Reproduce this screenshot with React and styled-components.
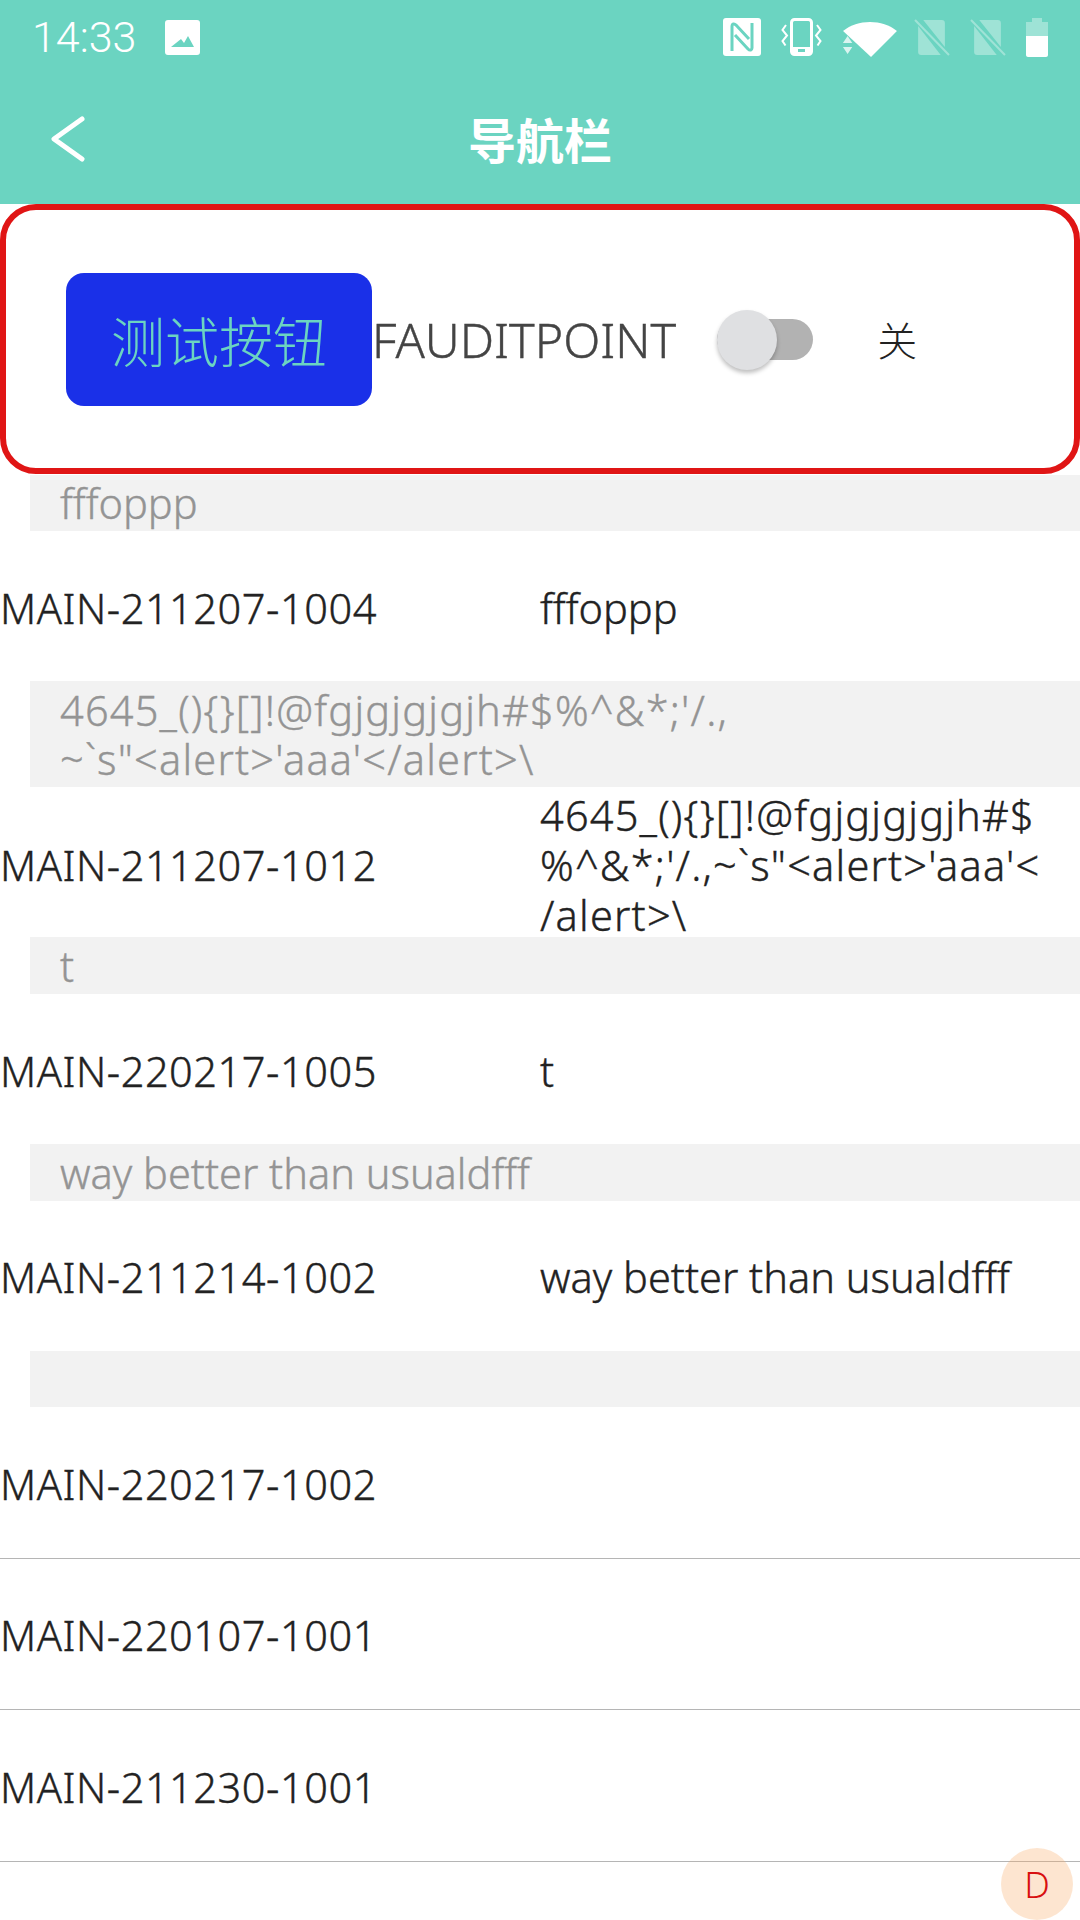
import React from "react";
import styled, { createGlobalStyle } from "styled-components";

const sections = [
  { code: "MAIN-211207-1004", name: ["fffoppp"], title: ["fffoppp"] },
  {
    code: "MAIN-211207-1012",
    name: ["4645_(){}[]!@fgjgjgjgjh#$", "%^&*;'/.,~`s\"<alert>'aaa'<", "/alert>\\"],
    title: ["4645_(){}[]!@fgjgjgjgjh#$%^&*;'/.,", "~`s\"<alert>'aaa'</alert>\\"],
    symbols: true,
  },
  { code: "MAIN-220217-1005", name: ["t"], title: ["t"] },
  { code: "MAIN-211214-1002", name: ["way better than usualdfff"], title: ["way better than usualdfff"] },
  { code: "MAIN-220217-1002", name: [], title: [], divided: true },
];

const plainRows = ["MAIN-220107-1001", "MAIN-211230-1001"];

function SimOff() {
  return (
    <svg width="36" height="38" viewBox="0 0 35 38" preserveAspectRatio="none">
      <g opacity="0.35" fill="#fff">
        <path d="M9 2h18c2 0 3 1 3 3v24Z" />
        <path d="M4 8l22 29H7c-2 0-3-1-3-3Z" />
        <path d="M1 2l33 35" stroke="#fff" strokeWidth="2" fill="none" />
      </g>
    </svg>
  );
}

function StatusIcons() {
  return (
    <StatusGroup>
      <svg width="38" height="38" viewBox="0 0 38 38">
        <rect width="38" height="38" rx="3" fill="#fff" />
        <path d="M9 33V8c0-2 2-3 4-1l13 14M29 5v25c0 2-2 3-4 1L12 17" fill="none" stroke="#6bd4c1" strokeWidth="3" />
      </svg>
      <svg width="41" height="38" viewBox="0 0 41 38" fill="none" stroke="#fff">
        <rect x="10.500" y="1.500" width="20" height="35" rx="3" strokeWidth="3" />
        <path d="M10 29h21v7H10Z" fill="#fff" stroke="none" />
        <rect x="17" y="31" width="7" height="3" fill="#6bd4c1" stroke="none" />
        <path d="M5 7 1.500 12 6 17.500 1.500 23l3 4.500M36 7l3.500 5-4.500 5.500 4.500 5.500-3 4.500" strokeWidth="2" />
      </svg>
      <WifiIcon width="56" height="39" viewBox="0 0 54 39" preserveAspectRatio="none">
        <path d="M1 13C15 1 39 1 53 13L28 39Z" fill="#fff" />
        <path d="M1 26h10L6 19Z M1 30h10l-5 7Z" fill="#fff" opacity="0.75" transform="translate(0 -1) scale(.9 1)" />
      </WifiIcon>
      <SimOff />
      <SimOff />
      <svg width="22" height="39" viewBox="0 0 22 39">
        <path d="M6 0h10v4h6v14H0V4h6Z" fill="#fff" opacity="0.35" />
        <path d="M0 18h22v19c0 1-1 2-2 2H2c-1 0-2-1-2-2Z" fill="#fff" />
      </svg>
    </StatusGroup>
  );
}

export default function App() {
  return (
    <>
      <GlobalStyle />
      <Page>
        <Header>
          <StatusBar>
            <Clock>14:33</Clock>
            <svg width="35" height="35" viewBox="0 0 35 35">
              <path fillRule="evenodd" d="M3 0h29c2 0 3 1 3 3v29c0 2-1 3-3 3H3c-2 0-3-1-3-3V3c0-2 1-3 3-3ZM6 27h23l-6-11-4 7-3-4Z" fill="#fff" />
            </svg>
            <StatusGap />
            <StatusIcons />
          </StatusBar>
          <NavBar>
            <BackButton>
              <svg width="36" height="48" viewBox="0 0 36 48" fill="none" stroke="#fff" strokeWidth="5" strokeLinecap="round" strokeLinejoin="round">
                <path d="M32 3 4 23l28 20" />
              </svg>
            </BackButton>
            <NavTitle>导航栏</NavTitle>
          </NavBar>
        </Header>

        <FormCard>
          <TestButton>测试按钮</TestButton>
          <AuditLabel>FAUDITPOINT</AuditLabel>
          <SwitchTrack>
            <SwitchThumb />
          </SwitchTrack>
          <SwitchText>关</SwitchText>
        </FormCard>

        <SectionList>
          {sections.map((item) => (
            <section key={item.code}>
              <SectionTitle $symbols={item.symbols}>
                {item.title.map((line) => <div key={line}>{line}</div>)}
              </SectionTitle>
              <Row $divided={item.divided}>
                <Code>{item.code}</Code>
                <Name $symbols={item.symbols}>
                  {item.name.map((line) => <div key={line}>{line}</div>)}
                </Name>
              </Row>
            </section>
          ))}

          {plainRows.map((code) => (
            <Row key={code} $divided>
              <Code>{code}</Code>
              <Name />
            </Row>
          ))}
        </SectionList>

        <DebugBadge>D</DebugBadge>
      </Page>
    </>
  );
}

const GlobalStyle = createGlobalStyle`
  html, body {
    margin: 0;
    padding: 0;
    background: #fff;
  }
  body {
    font-family: "Noto Sans", "Noto Sans CJK SC", sans-serif;
  }
`;

const Page = styled.div`
  position: relative;
  width: 1080px;
  height: 1920px;
  overflow: hidden;
  background: #fff;
`;

const Header = styled.header`
  height: 204px;
  background: #6bd4c1;
`;

const StatusBar = styled.div`
  height: 74px;
  display: flex;
  align-items: center;
  padding: 0 32px;
`;

const Clock = styled.span`
  font-family: Roboto, sans-serif;
  font-size: 43px;
  font-weight: 300;
  color: #fff;
  margin-right: 29px;
`;

const StatusGap = styled.div`
  flex: 1;
`;

const StatusGroup = styled.div`
  display: flex;
  align-items: center;
  gap: 20px;
`;

const WifiIcon = styled.svg`
  margin-right: -4px;
`;

const NavBar = styled.div`
  position: relative;
  box-sizing: border-box;
  height: 130px;
  padding-bottom: 2px;
  display: flex;
  align-items: center;
  justify-content: center;
`;

const BackButton = styled.div`
  position: absolute;
  left: 50px;
  top: 42px;
  display: flex;
`;

const NavTitle = styled.h1`
  margin: 0;
  font-size: 48px;
  font-weight: 700;
  color: #fff;
`;

const FormCard = styled.section`
  box-sizing: border-box;
  height: 270px;
  display: flex;
  align-items: center;
  padding-left: 60px;
  background: #fff;
  border: 6px solid #e01515;
  border-radius: 36px;
`;

const TestButton = styled.button`
  width: 306px;
  height: 133px;
  padding: 0;
  border: none;
  border-radius: 18px;
  background: #1a30e8;
  color: #6bd4c1;
  font-family: inherit;
  font-size: 54px;
  font-weight: 300;
`;

const AuditLabel = styled.span`
  font-size: 48.300px;
  font-weight: 300;
  color: #444;
  white-space: nowrap;
  -webkit-text-stroke: 0.4px #444;
`;

const SwitchTrack = styled.div`
  position: relative;
  flex: none;
  width: 96px;
  height: 41px;
  margin-left: 41px;
  border-radius: 21px;
  background: #b2b2b2;
`;

const SwitchThumb = styled.div`
  position: absolute;
  left: 0;
  top: -9px;
  width: 60px;
  height: 60px;
  border-radius: 50%;
  background: #dfe0e2;
  box-shadow: 0 3px 4px rgba(0, 0, 0, 0.25);
`;

const SwitchText = styled.span`
  margin-left: 64px;
  font-size: 40px;
  font-weight: 300;
  color: #222;
`;

const SectionList = styled.div`
  margin-top: 0.6px;
`;

const SectionTitle = styled.div`
  margin-left: 30px;
  padding: 4.500px 0 2.670px 30px;
  background: #f2f2f2;
  font-size: 41.500px;
  font-weight: 300;
  line-height: 49.500px;
  min-height: 49.500px;
  color: #949494;
  -webkit-text-stroke: 0.4px #949494;
  letter-spacing: ${(props) => (props.$symbols ? "1.2px" : "0")};
`;

const Row = styled.div`
  box-sizing: border-box;
  height: ${(props) => (props.$divided ? "151.4px" : "150px")};
  padding-top: 3px;
  display: grid;
  grid-template-columns: 540px 1fr;
  align-items: center;
  border-bottom: ${(props) => (props.$divided ? "1.5px solid #b5b5b5" : "none")};
  font-size: 41.500px;
  font-weight: 300;
  line-height: 50px;
  color: #222;
  -webkit-text-stroke: 0.4px #222;
`;

const Code = styled.div`
  white-space: nowrap;
  letter-spacing: 0.54px;
`;

const Name = styled.div`
  white-space: nowrap;
  letter-spacing: ${(props) => (props.$symbols ? "1.2px" : "0")};
`;

const DebugBadge = styled.div`
  position: absolute;
  right: 7px;
  bottom: 0;
  width: 72px;
  height: 72px;
  display: flex;
  align-items: center;
  justify-content: center;
  border-radius: 50%;
  background: rgba(250, 170, 100, 0.3);
  color: #d81010;
  font-size: 36px;
  font-weight: 300;
`;
